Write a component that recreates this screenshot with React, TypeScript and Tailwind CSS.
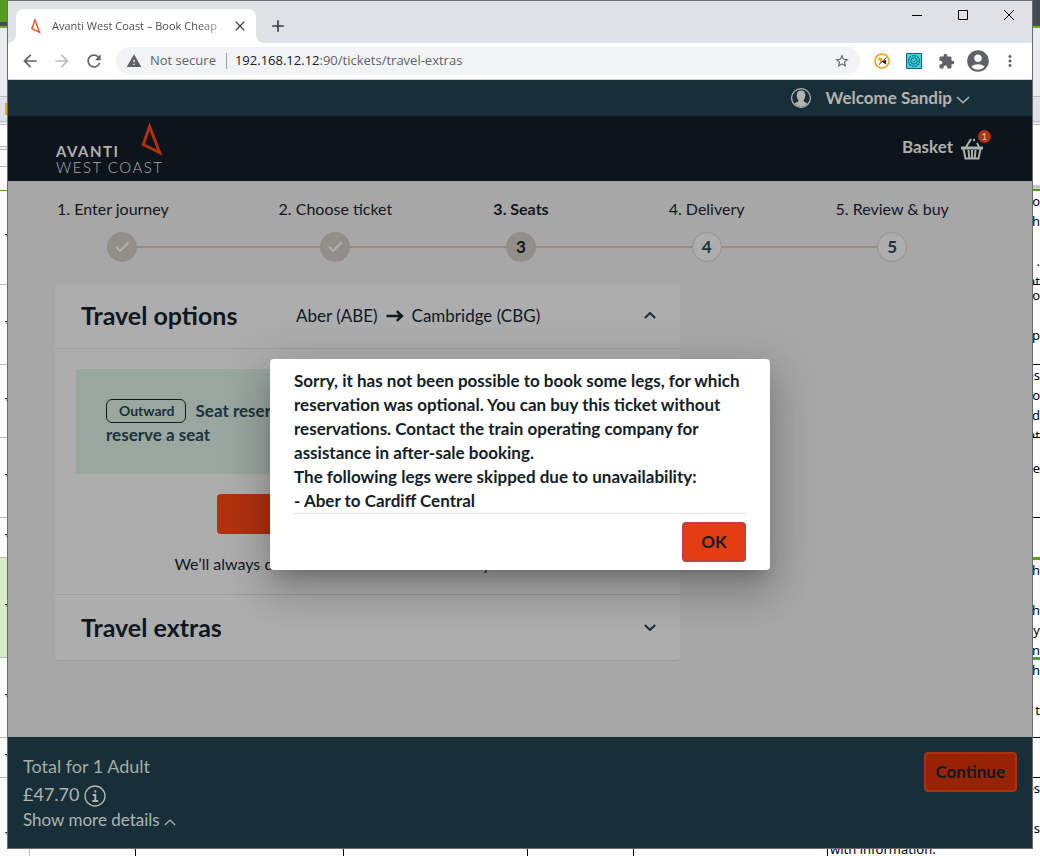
import type { ReactNode } from 'react';
import {
  MdAccountCircle,
  MdAdd,
  MdArrowBack,
  MdArrowForward,
  MdClose,
  MdExtension,
  MdMoreVert,
  MdRefresh,
  MdStarBorder,
  MdWarning,
} from 'react-icons/md';

function Triangle({ className }: { className: string }) {
  return (
    <svg viewBox="0 0 22 34" className={className} fill="none" stroke="currentColor" strokeWidth="3" aria-hidden="true">
      <path d="M8.6 4.5 2.3 22.5 18.6 30.5Z" />
    </svg>
  );
}

function Chevron({ up = false, className }: { up?: boolean; className: string }) {
  return (
    <svg viewBox="0 0 14 8" className={className} fill="none" stroke="currentColor" aria-hidden="true">
      <path d={up ? 'M1 7 7 1.2 13 7' : 'M1 1 7 6.8 13 1'} />
    </svg>
  );
}

/* Row markers of the spreadsheet visible left of the window */
function Mark() {
  return (
    <span className="flex flex-col items-end pb-1">
      <span className="h-px w-0.5 bg-[#333]" />
      <span className="h-0.5 w-px bg-[#b9ad8c]" />
    </span>
  );
}

function LeftEdge() {
  return (
    <div className="flex w-[7px] flex-col overflow-hidden bg-[#fbfbfb]" aria-hidden="true">
      <div className="h-[22px] bg-[#559c27]" />
      <div className="h-1 bg-[#454a55]" />
      <div className="h-0.5 bg-[#6ab42d]" />
      <div className="h-[69px] border-b border-[#b9bbc0] bg-[#ebecee]" />
      <div className="flex h-[25px] items-center justify-end border-b border-[#b9bbc0] bg-[#dfe1e6]">
        <span className="h-3 w-0.5 bg-[#e9a820]" />
      </div>
      <div className="h-[3px] border-b border-[#b9bbc0] bg-[#ebecee]" />
      <div className="h-[22px] border-b border-[#b9bbc0] bg-white" />
      <div className="h-[3px] border-b border-[#b9bbc0] bg-[#ebecee]" />
      <div className="h-[17px] border-b border-[#b9bbc0]" />
      <div className="h-6 border-b border-[#559c27]" />
      <div className="flex h-[94px] items-center justify-end border-b border-[#bbb]"><Mark /></div>
      <div className="flex h-20 items-center justify-end border-b border-[#bbb]"><Mark /></div>
      <div className="flex h-[73px] items-center justify-end border-b border-[#bbb]"><Mark /></div>
      <div className="flex h-20 items-center justify-end border-b border-[#bbb]"><Mark /></div>
      <div className="flex h-10 items-center justify-end border-b border-[#bbb]"><Mark /></div>
      <div className="flex h-[100px] items-center justify-end border-b border-[#bbb] bg-[#d7edc5]"><Mark /></div>
      <div className="flex h-20 items-center justify-end border-b border-[#bbb]"><Mark /></div>
      <div className="flex h-10 items-center justify-end border-b border-[#bbb]"><Mark /></div>
      <div className="flex flex-1 items-end justify-end pb-2.5"><Mark /></div>
    </div>
  );
}

function Cell({ className, lines }: { className: string; lines: string[] }) {
  return (
    <div className={`overflow-hidden text-[13px] leading-5 text-black ${className}`}>
      {lines.map((line, i) => (
        <div key={i} className="flex h-5 justify-end whitespace-nowrap">{line}</div>
      ))}
    </div>
  );
}

function RightEdge() {
  return (
    <div className="flex w-[7px] flex-col overflow-hidden bg-white font-['Noto_Sans',sans-serif]" aria-hidden="true">
      <div className="h-[26px] bg-[#454a55]" />
      <div className="h-0.5 bg-[#6ab42d]" />
      <div className="h-[69px] border-b border-[#b9bbc0] bg-[#ebecee]" />
      <div className="h-[25px] border-b border-[#b9bbc0] bg-[#dfe1e6]" />
      <div className="h-[3px] border-b border-[#b9bbc0] bg-[#ebecee]" />
      <div className="h-[60px]" />
      <div className="h-1 bg-[#c8c8c8]" />
      <div className="h-0.5 bg-[#559c27]" />
      <Cell className="h-[94px] border-b border-black" lines={['o', 'h', '', '.', 'at']} />
      <Cell className="h-20 border-b border-black" lines={['o', '', 'p']} />
      <Cell className="h-[73px] border-b border-black" lines={['es', 'o', 'd', 'at']} />
      <Cell className="h-20 border-b border-black" lines={['', 'te']} />
      <div className="h-[39px]" />
      <div className="h-[3px] bg-[#559c27]" />
      <Cell className="h-[97px]" lines={['h', '', 'th', 'ey', 'n']} />
      <div className="h-[3px] bg-[#559c27]" />
      <Cell className="h-[78px] border-b border-black" lines={['h', '', 't']} />
      <Cell className="h-10 border-b border-black" lines={[]} />
      <Cell className="flex-1" lines={['os', '', 's']} />
    </div>
  );
}

function BottomEdge() {
  return (
    <div className="flex h-[7px] overflow-hidden bg-white" aria-hidden="true">
      <div className="w-[30px] border-r border-[#bbb] bg-[#fbfbfb]" />
      <div className="w-[106px] border-r border-black" />
      <div className="w-[208px] border-r border-black" />
      <div className="w-[184px] border-r border-black" />
      <div className="w-[106px] border-r border-black" />
      <div className="w-[194px] border-r border-black" />
      <div className="flex flex-1 items-end pl-0.5 font-['Noto_Sans',sans-serif] text-[13px] leading-[14px] text-black">
        <span className="whitespace-nowrap">with information.</span>
      </div>
    </div>
  );
}

function BrowserChrome() {
  return (
    <header className="font-['Open_Sans',sans-serif]">
      <div className="flex h-[42px] items-end justify-between bg-[#dee1e6]">
        <div className="flex items-end">
          <div className="size-2 bg-white"><div className="size-2 rounded-br-lg bg-[#dee1e6]" /></div>
          <div className="flex h-[34px] w-60 items-center rounded-t-lg bg-white pl-3 pr-2">
            <Triangle className="h-4 w-4 text-[#f04e23]" />
            <span className="ml-2 flex-1 overflow-hidden whitespace-nowrap bg-linear-to-r from-[#45484c] from-85% to-[#c8c8c8] bg-clip-text text-[11px] text-transparent">
              Avanti West Coast – Book Cheap
            </span>
            <button aria-label="Close tab" className="ml-2 text-[#45484c]"><MdClose size={16} /></button>
          </div>
          <div className="size-2 bg-white"><div className="size-2 rounded-bl-lg bg-[#dee1e6]" /></div>
          <button aria-label="New tab" className="mb-[7px] ml-1 text-[#3c4043]"><MdAdd size={20} /></button>
        </div>
        <div className="flex h-full items-start text-black">
          <button aria-label="Minimize" className="flex h-7 w-[46px] items-center justify-center">
            <svg width="10" height="10" aria-hidden="true"><path d="M0 5.5h10" stroke="currentColor" /></svg>
          </button>
          <button aria-label="Maximize" className="flex h-7 w-[46px] items-center justify-center">
            <svg width="10" height="10" aria-hidden="true"><path d="M.5.5h9v9h-9z" fill="none" stroke="currentColor" /></svg>
          </button>
          <button aria-label="Close" className="flex h-7 w-[46px] items-center justify-center">
            <svg width="10" height="10" aria-hidden="true"><path d="m0 0 10 10M10 0 0 10" stroke="currentColor" /></svg>
          </button>
        </div>
      </div>
      <div className="flex h-[37px] items-center border-b border-[#cfd1d3] bg-white pl-3 pr-[13px] text-[#5f6368]">
        <button aria-label="Back"><MdArrowBack size={20} /></button>
        <button aria-label="Forward" className="ml-3 text-[#babcbe]"><MdArrowForward size={20} /></button>
        <button aria-label="Reload" className="ml-3"><MdRefresh size={20} /></button>
        <div className="ml-3 flex h-7 flex-1 items-center rounded-full bg-[#f1f3f4] px-2.5 text-[13px]">
          <MdWarning size={16} />
          <span className="ml-2 whitespace-nowrap">Not secure</span>
          <span className="ml-2.5 mr-2 h-4 w-px bg-[#9aa0a6]" />
          <span className="flex-1"><span className="text-[#202124]">192.168.12.12</span>:90/tickets/travel-extras</span>
          <button aria-label="Bookmark"><MdStarBorder size={16} /></button>
        </div>
        <button aria-label="Page checker" className="ml-3.5">
          <svg width="16" height="16" viewBox="0 0 16 16" aria-hidden="true">
            <circle cx="8" cy="8" r="7" fill="#fff" stroke="#f99d1c" strokeWidth="1.6" />
            <path d="M3.5 5h5L7 10z" fill="#f99d1c" />
            <path d="M12.500 4.500 5 11.500" stroke="#222" strokeWidth="1" />
            <path d="m7.500 8.500 4.500-1.500v4.500z" fill="#222" />
          </svg>
        </button>
        <button aria-label="Cog extension" className="ml-4">
          <svg width="16" height="16" viewBox="0 0 16 16" fill="none" stroke="#17606d" aria-hidden="true">
            <path d="M.5.5h15v15H.5z" fill="#3fd5e6" />
            <circle cx="8" cy="8" r="5.4" strokeDasharray="2 .8" strokeWidth="1.3" />
            <circle cx="8" cy="8" r="3.2" />
            <path d="m6.5 8.2 1.2 1 2-2.2" />
          </svg>
        </button>
        <button aria-label="Extensions" className="ml-4"><MdExtension size={17} /></button>
        <button aria-label="Profile" className="ml-2.5"><MdAccountCircle size={26} /></button>
        <button aria-label="Menu" className="ml-2.5"><MdMoreVert size={18} /></button>
      </div>
    </header>
  );
}

function SiteHeader() {
  return (
    <>
      <div className="flex h-9 items-center justify-end bg-[#182f3a] pr-[62px] text-[#b3b3b0]">
        <svg width="22" height="22" viewBox="0 0 22 22" aria-hidden="true">
          <circle cx="11" cy="11" r="9.4" fill="none" stroke="currentColor" strokeWidth="1.3" />
          <path d="M11 3.6c2.9 0 4.3 1.9 4.3 4.6 0 2.2-.8 3.5-1.5 4.4v1.8c1.4.7 3 1 3.7 2.3A9 9 0 0 1 11 20a9 9 0 0 1-6.500-3.300c.7-1.300 2.300-1.600 3.700-2.300v-1.800c-.7-.9-1.500-2.200-1.500-4.400 0-2.700 1.400-4.600 4.300-4.600Z" fill="currentColor" />
        </svg>
        <button className="ml-3.5 flex items-center gap-1 text-[17px] font-bold">
          Welcome Sandip
          <Chevron className="mt-1 h-2 w-3.5 stroke-[1.5]" />
        </button>
      </div>
      <div className="flex h-[65px] items-center justify-between bg-[#0d141b] pl-12 pr-[45px] text-[#aeb1ae]">
        <a href="#home" aria-label="Avanti West Coast" className="relative pt-5">
          <span className="block text-[15px] font-bold leading-4 tracking-widest">AVANTI</span>
          <span className="block text-[15px] font-light leading-4 tracking-widest">WEST COAST</span>
          <Triangle className="absolute -top-px right-0 h-[34px] w-[22px] text-[#b0320e]" />
        </a>
        <a href="#basket" className="flex items-center gap-2 pb-1 text-[17px] font-bold">
          Basket
          <span className="relative pr-1 pt-1">
            <svg width="22" height="22" viewBox="0 0 22 22" fill="none" stroke="currentColor" aria-hidden="true">
              <path d="M0 8.500h22v3H0z" fill="currentColor" stroke="none" />
              <path d="M2.500 11 4.500 20.500h13L19.500 11M7.500 12l.7 8M11 12v8M14.500 12l-.7 8" strokeWidth="2" />
              <path d="M5 9 10 1M12.500 1l1 2M16 5l2 4" strokeWidth="2" />
            </svg>
            <span className="absolute -right-1 -top-1 flex size-[13px] items-center justify-center rounded-full bg-[#b0320e] text-[10px] leading-3">1</span>
          </span>
        </a>
      </div>
    </>
  );
}

const steps = ['Enter journey', 'Choose ticket', 'Seats', 'Delivery', 'Review & buy'];

function Stepper() {
  return (
    <ol className="grid grid-cols-5 pl-0.5 pt-4">
      {steps.map((label, i) => {
        const n = i + 1;
        const line = 'h-0.5 flex-1 bg-[#948d88]';
        return (
          <li key={label} className="text-[16px] leading-6 text-[#10181f]">
            <div className={`${i === 0 ? 'text-left' : 'text-center'} ${n === 3 ? 'font-bold' : ''}`}>
              {n}. {label}
            </div>
            <div className="mt-[11px] flex items-center">
              {i === 0 ? <span className="w-[50px]" /> : <span className={line} />}
              {n < 3 && (
                <span className="flex size-[30px] items-center justify-center rounded-full bg-[#928e89]">
                  <svg width="16" height="12" viewBox="0 0 16 12" fill="none" stroke="#b5b4b2" strokeWidth="1.800" aria-hidden="true">
                    <path d="m2 5.500 4 4.500L14.500 1.500" />
                  </svg>
                </span>
              )}
              {n === 3 && (
                <span className="flex size-[30px] items-center justify-center rounded-full bg-[#928e89] text-[17px] font-bold">3</span>
              )}
              {n > 3 && (
                <span className="flex size-[30px] items-center justify-center rounded-full border border-[#95918d] bg-[#adadad] text-[17px] font-bold text-[#1b323f]">{n}</span>
              )}
              {n < 5 ? <span className={line} /> : <span className="flex-1" />}
            </div>
          </li>
        );
      })}
    </ol>
  );
}

function PanelHeading({ title, open, children }: { title: string; open: boolean; children?: ReactNode }) {
  return (
    <h2>
      <button aria-expanded={open} className="flex h-[65px] w-full items-center px-[26px] text-left text-[#10181f]">
        <span className="w-[215px] text-[25px] font-bold">{title}</span>
        <span className="flex flex-1 items-center gap-2 text-[17px]">{children}</span>
        <Chevron up={open} className="-mr-0.5 h-[7px] w-3 stroke-[2.5] text-[#1b323f]" />
      </button>
    </h2>
  );
}

function TravelCard() {
  return (
    <section className="mt-[21px] w-[625px] max-w-full rounded-sm border-b border-[#9c9c9c] bg-[#adadad]">
      <PanelHeading title="Travel options" open>
        Aber (ABE)
        <svg width="18" height="12" viewBox="0 0 18 12" fill="none" stroke="currentColor" strokeWidth="2.400" strokeLinecap="round" aria-label="to">
          <path d="M1.500 6h14M11.500 1.800 16 6l-4.500 4.200" />
        </svg>
        Cambridge (CBG)
      </PanelHeading>
      <div className="border-y border-[#9c9c9c] px-[21px] pb-[18px] pt-5">
        <div className="h-[105px] bg-[#9aa79e] px-[30px] pt-[30px] text-[17px] font-bold leading-6 text-[#1b323f]">
          <div className="flex items-center gap-2.5 whitespace-nowrap">
            <span className="rounded-md border border-[#10181f] pl-3 pr-2.5 text-[14px] leading-[22px]">Outward</span>
            Seat reservations are full
          </div>
          reserve a seat
        </div>
        <div className="mt-5 flex justify-center">
          <button aria-label="Choose seats" className="h-10 w-[302px] rounded bg-[#b0320e]" />
        </div>
        <p className="mt-[18px] text-center text-[16px] leading-6 text-[#10181f]">
          We’ll always do our best to find the seat for you in time
        </p>
      </div>
      <PanelHeading title="Travel extras" open={false} />
    </section>
  );
}

function Footer() {
  return (
    <footer className="flex items-start justify-between bg-[#182f3a] px-[15px] pb-4 pt-[15px] text-[#b0b3b0]">
      <div>
        <div className="text-[18px] leading-7 text-[#a3ada3]">Total for 1 Adult</div>
        <div className="flex items-center gap-1 text-[18px] leading-7">
          £47.70
          <button aria-label="Price information" className="mt-1">
            <svg width="24" height="24" viewBox="0 0 24 24" fill="none" stroke="currentColor" aria-hidden="true">
              <circle cx="12" cy="12" r="10" strokeWidth="1.400" />
              <path d="M12.300 6.300v2.200M9.800 11h2.500v6M9.300 17h6" strokeWidth="1.900" />
            </svg>
          </button>
        </div>
        <button className="flex items-center gap-1 text-[17px] leading-6">
          Show more details
          <Chevron up className="mt-1 h-[7px] w-3 stroke-[1.5]" />
        </button>
      </div>
      <button className="h-10 rounded border-2 border-[#ad300d] bg-[#982304] px-2.5 text-[17px] font-bold text-[#111a20]">Continue</button>
    </footer>
  );
}

function Dialog() {
  return (
    <div className="absolute inset-0 flex items-center justify-center">
      <div
        role="alertdialog"
        aria-modal="true"
        aria-describedby="dialog-text"
        className="w-[500px] max-w-full rounded bg-white px-6 pb-2 pt-2.5 shadow-[0_11px_15px_-7px_rgba(0,0,0,0.2),0_24px_38px_3px_rgba(0,0,0,0.14),0_9px_46px_8px_rgba(0,0,0,0.12)]"
      >
        <div id="dialog-text" className="border-b border-[#e2e2e2] text-[17px] font-bold leading-6 text-[#141e26]">
          <p>
            Sorry, it has not been possible to book some legs, for which reservation was optional. You can buy this
            ticket without reservations. Contact the train operating company for assistance in after-sale booking.
          </p>
          <p>The following legs were skipped due to unavailability:</p>
          <p>- Aber to Cardiff Central</p>
        </div>
        <div className="flex justify-end pt-2">
          <button className="h-10 w-16 rounded border-2 border-[#c0413f] bg-[#e43d12] text-[17px] font-bold text-[#141e26]">OK</button>
        </div>
      </div>
    </div>
  );
}

export default function App() {
  return (
    <div className="flex min-h-screen flex-col bg-white">
      <div className="flex flex-1">
        <LeftEdge />
        <div className="flex min-w-0 flex-1 flex-col border border-[#6b6b6b]">
          <BrowserChrome />
          <div className="relative flex flex-1 flex-col bg-[#a7a7a7] font-['Lato',sans-serif]">
            <SiteHeader />
            <main className="flex-1 px-[47px] pb-10">
              <Stepper />
              <TravelCard />
            </main>
            <Footer />
            <Dialog />
          </div>
        </div>
        <RightEdge />
      </div>
      <BottomEdge />
    </div>
  );
}
